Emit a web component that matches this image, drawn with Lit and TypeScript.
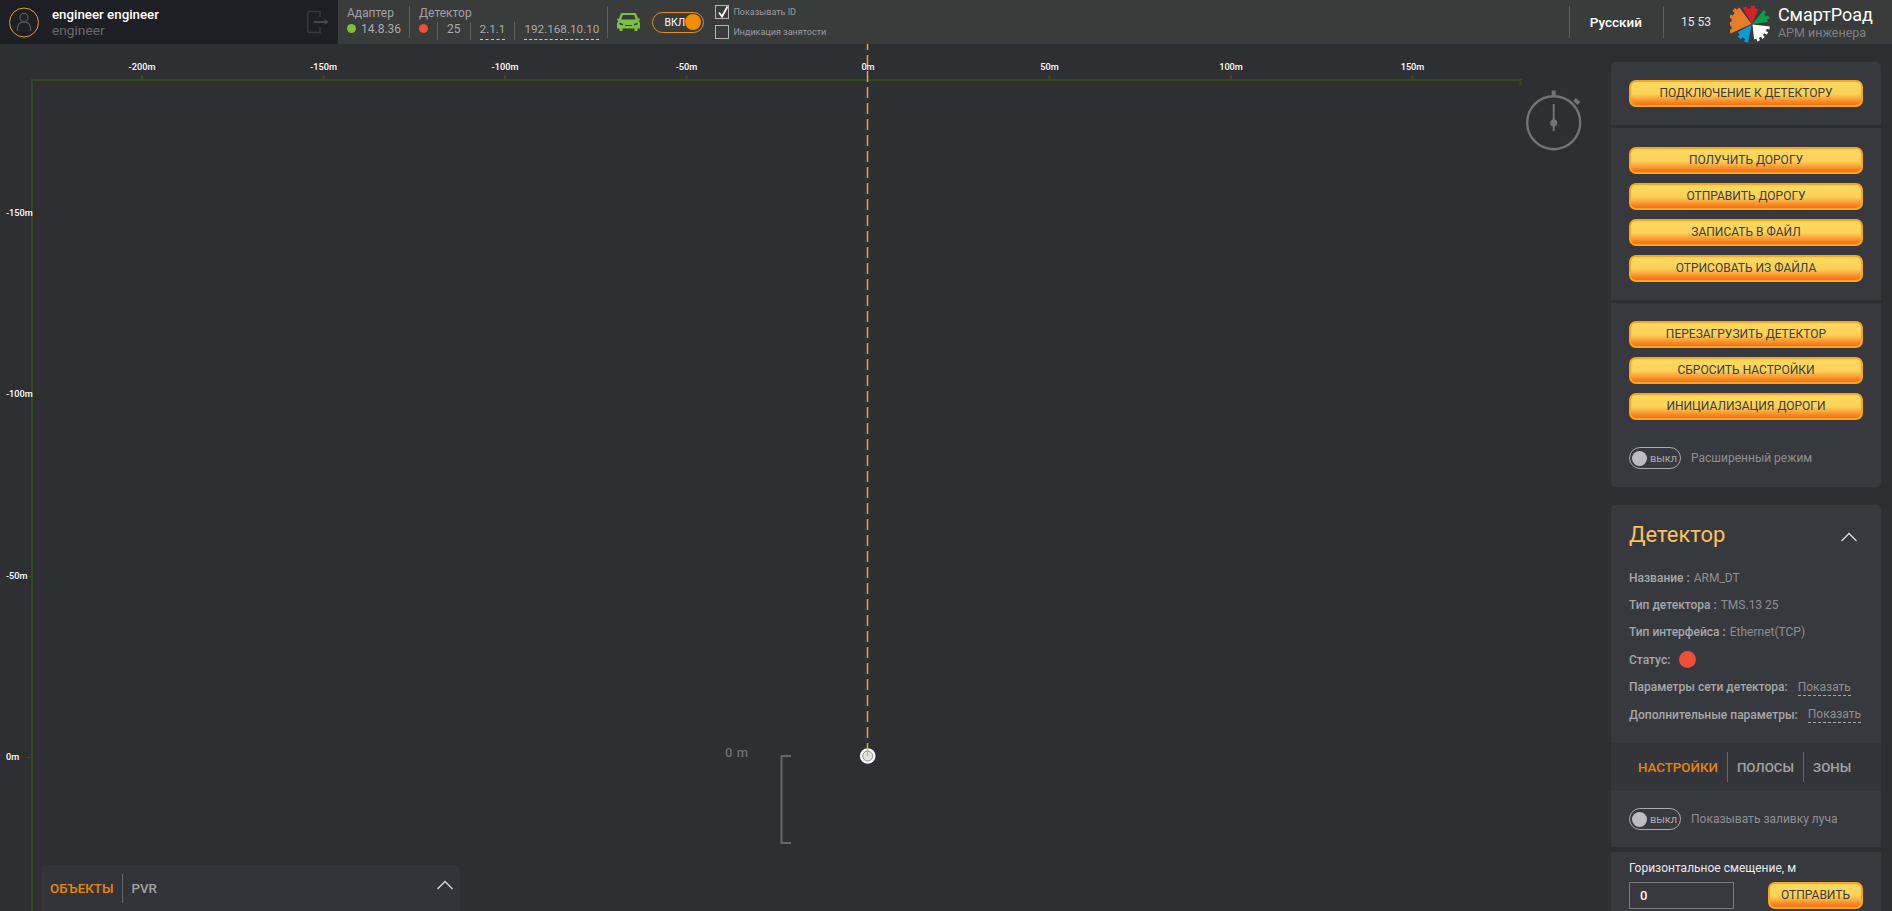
import { LitElement, html, css, svg } from 'lit';
import { customElement } from 'lit/decorators.js';

const TOP_LABELS = [-200, -150, -100, -50, 0, 50, 100, 150];
const LEFT_LABELS = [-150, -100, -50, 0];
const STEP = 181.5;
const ZERO_X = 868;
const ZERO_Y = 713; // canvas starts below the 44px header

// crenellated pie slice for the gear logo
function slice(a0: number, a1: number, r: number, cx: number, cy: number) {
  const pts: string[] = [`${cx},${cy}`];
  const teeth = Math.max(2, Math.round((a1 - a0) / 22));
  const step = (a1 - a0) / (teeth * 2);
  for (let i = 0; i < teeth * 2; i++) {
    const rr = i % 2 === 0 ? r : r - 2.6;
    for (const a of [a0 + i * step, a0 + (i + 1) * step]) {
      const rad = ((a - 90) * Math.PI) / 180;
      pts.push(`${(cx + rr * Math.cos(rad)).toFixed(1)},${(cy + rr * Math.sin(rad)).toFixed(1)}`);
    }
  }
  return pts.join(' ');
}

@customElement('app-root')
export class AppRoot extends LitElement {
  static styles = css`
    :host {
      display: block;
      width: 100%;
      height: 100vh;
      overflow: hidden;
      background: #2e2f33;
      font-family: Roboto, 'Liberation Sans', sans-serif;
      color: #a9aaac;
    }
    .app {
      display: flex;
      flex-direction: column;
      height: 100%;
    }

    /* header */
    .header {
      flex: 0 0 44px;
      display: flex;
      align-items: stretch;
      background: #3a3b3b;
      white-space: nowrap;
    }
    .user {
      flex: 0 0 338px;
      box-sizing: border-box;
      display: flex;
      align-items: center;
      background: #1e1f24;
      padding-left: 9px;
    }
    .avatar {
      display: block;
      margin-right: 13px;
    }
    .user-names {
      flex: 1;
    }
    .user-name {
      font-size: 13.3px;
      font-weight: 500;
      line-height: 16px;
      color: #fff;
    }
    .user-role {
      font-size: 13.7px;
      line-height: 15px;
      color: #68696c;
    }
    .logout {
      display: block;
      margin-right: 9px;
    }
    .status {
      display: flex;
      align-items: center;
      padding-left: 9px;
    }
    .vline {
      width: 1px;
      height: 32px;
      background: #5d5e5f;
      flex: none;
    }
    .vline.short {
      height: 18px;
      margin-top: 1px;
    }
    .block {
      display: flex;
      flex-direction: column;
      padding-top: 2px;
      font-size: 12px;
      line-height: 16px;
      color: #a9aaac;
    }
    .block-title {
      color: #a0a1a3;
    }
    .block-row {
      display: flex;
      align-items: flex-start;
      height: 20px;
    }
    .dot {
      width: 9px;
      height: 9px;
      border-radius: 50%;
      flex: none;
      margin-top: 3px;
    }
    .dot.green {
      background: #7cc232;
      margin-right: 5px;
    }
    .dot.red {
      background: #f04e37;
      margin-right: 9px;
    }
    .adapter {
      margin-right: 8px;
    }
    .detector {
      margin-left: 9px;
      margin-right: 8px;
    }
    .num {
      margin: 0 9px;
    }
    .dashed {
      border-bottom: 1px dashed #c8c8c8;
      padding-bottom: 2px;
      margin: 0 9px;
      font-size: 11.7px;
    }
    .dashed.end {
      margin-right: 0;
    }
    .car {
      display: block;
      margin: 0 12px 0 9px;
    }
    .switch-on {
      box-sizing: border-box;
      width: 52px;
      height: 21px;
      display: flex;
      align-items: center;
      justify-content: space-between;
      border: 1px solid #e8911a;
      border-radius: 11px;
      padding: 0 2px 0 11px;
      font-size: 10.5px;
      color: #fff;
      margin-right: 11px;
    }
    .switch-on i {
      flex: none;
      width: 16px;
      height: 16px;
      border-radius: 50%;
      background: #f08c00;
    }
    .checks {
      display: flex;
      flex-direction: column;
      gap: 6px;
      margin-top: -1px;
      font-size: 9px;
      color: #9a9b9c;
    }
    .check {
      display: flex;
      align-items: center;
      gap: 4px;
      height: 14px;
    }
    .box {
      box-sizing: border-box;
      width: 14px;
      height: 14px;
      border: 1px solid #b5b5b5;
      position: relative;
    }
    .box svg {
      position: absolute;
      left: 1px;
      top: -1px;
    }
    .spacer {
      flex: 1;
    }
    .center {
      align-self: center;
    }
    .lang {
      font-size: 13.5px;
      font-weight: 500;
      color: #fff;
      margin: 0 21px 0 20px;
    }
    .time {
      font-size: 12px;
      color: #e4e5e6;
      margin: 0 19px 0 17px;
    }
    .logo {
      display: block;
      align-self: center;
      margin-right: 2px;
    }
    .brand {
      align-self: center;
      padding-left: 2px;
      margin-right: 19px;
    }
    .brand-name {
      font-size: 18px;
      line-height: 21px;
      color: #fff;
    }
    .brand-sub {
      font-size: 12.5px;
      line-height: 15px;
      color: #7f8082;
    }

    /* main */
    .main {
      flex: 1;
      display: flex;
      min-height: 0;
    }
    .canvas {
      flex: 0 0 1593px;
      position: relative;
      overflow: hidden;
    }
    .canvas > svg {
      position: absolute;
      left: 0;
      top: 0;
    }
    .label {
      position: absolute;
      font-size: 9.2px;
      line-height: 12px;
      font-weight: 500;
      color: #fff;
      white-space: nowrap;
    }
    .label.top {
      top: 17px;
      transform: translateX(-50%);
    }
    .label.left {
      left: 6px;
      transform: translateY(-50%);
    }
    .range {
      position: absolute;
      left: 725px;
      top: 701px;
      font-size: 13px;
      line-height: 15px;
      font-weight: 500;
      letter-spacing: 0.6px;
      color: #6d6e71;
    }
    .objects {
      position: absolute;
      left: 41px;
      bottom: 0;
      width: 419px;
      height: 46px;
      box-sizing: border-box;
      display: flex;
      align-items: center;
      padding: 1px 7px 0 9px;
      background: #33343a;
      border-radius: 5px 5px 0 0;
      font-size: 13.3px;
      font-weight: 500;
      color: #a0a1a3;
    }
    .objects .vline {
      height: 29px;
      margin: 0 8px 0 9px;
      background: #66676a;
    }
    .objects .spacer + svg {
      display: block;
      margin-top: -7px;
    }
    .active {
      color: #e8860c;
    }

    /* side panel */
    .side {
      flex: 1;
      box-sizing: border-box;
      padding: 18px 11px 0 18px;
      display: flex;
      flex-direction: column;
      overflow: hidden;
    }
    .group {
      background: #38393f;
      padding: 18px;
      display: flex;
      flex-direction: column;
      gap: 9px;
      flex: none;
    }
    .group + .group {
      margin-top: 3px;
    }
    .group.first {
      border-radius: 5px 5px 0 0;
    }
    .group.last {
      border-radius: 0 0 5px 5px;
    }
    .group.gap-top {
      padding-top: 19px;
    }
    button {
      box-sizing: border-box;
      height: 27px;
      border: 2px solid #f9a51f;
      border-radius: 7px;
      background: linear-gradient(#fdd860 0%, #fcd258 52%, #f87c1c 92%, #f7701a 100%);
      font-family: inherit;
      font-size: 12px;
      color: #3c3a38;
      padding: 0 0 1px;
    }
    .toggle-row {
      display: flex;
      align-items: center;
      gap: 10px;
      font-size: 12px;
      color: #8e8f92;
      white-space: nowrap;
    }
    .toggle-row.adv {
      margin-top: 18px;
    }
    .switch-off {
      box-sizing: border-box;
      width: 52px;
      height: 22px;
      display: flex;
      align-items: center;
      gap: 3px;
      border: 1px solid #a8a9ab;
      border-radius: 11px;
      padding-left: 2px;
      font-size: 11px;
      color: #a9aaac;
    }
    .switch-off i {
      width: 15px;
      height: 15px;
      border-radius: 50%;
      background: #bdbdbf;
    }
    .info {
      background: #38393f;
      margin-top: 18px;
      height: 238px;
      box-sizing: border-box;
      padding: 0 18px;
      border-radius: 5px 5px 0 0;
      flex: none;
      font-size: 12px;
    }
    .info-head {
      height: 59px;
      display: flex;
      align-items: center;
      justify-content: space-between;
      padding: 0 6px 0 0;
    }
    .info-head h2 {
      margin: 0;
      font-size: 22px;
      font-weight: 400;
      color: #fbc25f;
    }
    .info-head svg {
      display: block;
      margin-top: 5px;
    }
    .info-row {
      height: 27.4px;
      display: flex;
      align-items: center;
      gap: 4px;
      white-space: nowrap;
      color: #8e8f92;
    }
    .info-row b {
      font-weight: 500;
      color: #a6a7a9;
    }
    .info-row .link {
      border-bottom: 1px dashed #a6a7a9;
      line-height: 16px;
      margin-left: 6px;
      color: #8e8f92;
    }
    .status-dot {
      width: 17px;
      height: 17px;
      background: #f04e37;
      border-radius: 50%;
      margin-left: 5px;
    }
    .tabs {
      height: 48px;
      flex: none;
      display: flex;
      align-items: center;
      padding-left: 27px;
      background: #34353b;
      font-size: 13.3px;
      font-weight: 500;
      color: #a3a4a6;
      white-space: nowrap;
    }
    .tabs .vline {
      height: 30px;
      background: #66676a;
      margin: 0 9px;
    }
    .group.beam {
      height: 56px;
      box-sizing: border-box;
      padding: 0 18px;
      justify-content: center;
      margin-top: 0;
    }
    .group.form {
      margin-top: 5px;
      padding: 9px 18px 2px;
      gap: 7px;
      flex: 1;
      font-size: 12px;
      color: #e9e9ea;
    }
    .form-row {
      display: flex;
      justify-content: space-between;
    }
    .input {
      box-sizing: border-box;
      width: 105px;
      height: 27px;
      border: 1px solid #77787a;
      padding-left: 10px;
      font-size: 13px;
      font-weight: 500;
      line-height: 25px;
      color: #fff;
    }
    .send {
      width: 95px;
    }
  `;

  private _topLabels() {
    return TOP_LABELS.map(
      (v) =>
        html`<span class="label top" style="left:${ZERO_X + (v / 50) * STEP}px">${v}m</span>`,
    );
  }

  private _leftLabels() {
    return LEFT_LABELS.map(
      (v) =>
        html`<span class="label left" style="top:${ZERO_Y + (v / 50) * STEP}px">${v}m</span>`,
    );
  }

  private _grid() {
    const line = '#36491a';
    return svg`
      <svg width="1593" height="867" fill="none">
        <path d="M32 867V36H1520.5V41" stroke=${line} stroke-width="2"/>
        ${TOP_LABELS.map((v) => {
          const x = ZERO_X + (v / 50) * STEP;
          return svg`<path d="M${x} 31V36" stroke=${line} stroke-width="2"/>`;
        })}
        ${LEFT_LABELS.map((v) => {
          const y = Math.round(ZERO_Y + (v / 50) * STEP);
          return svg`<path d="M26 ${y}.5H32" stroke=${line} stroke-width="1"/>`;
        })}
        <path d="M867.5 0V704" stroke="#e8a33d" stroke-width="1.5" stroke-dasharray="11 5" stroke-dashoffset="5"/>
        <circle cx="867.7" cy="712" r="7.8" fill="#fff"/>
        <circle cx="867.7" cy="712" r="5" fill="#e4e4e5" stroke="#8b8c8e" stroke-width="1"/>
        <path d="M867.5 702V712" stroke="#e8a33d" stroke-width="1.2"/>
        <path d="M791 712H781.5V799H791" stroke="#66676a" stroke-width="2"/>
        <g stroke="#727375">
          <circle cx="1553.7" cy="78.7" r="26.5" stroke-width="2.4"/>
          <path d="M1553.7 46.5V52" stroke-width="4"/>
          <path d="M1574.5 55.5L1579 59.5" stroke-width="4"/>
          <path d="M1553.7 60V87" stroke-width="2"/>
        </g>
        <circle cx="1553.7" cy="79" r="3.5" fill="#727375"/>
      </svg>
    `;
  }

  private _chevron() {
    return html`<svg width="16" height="10" viewBox="0 0 16 10" fill="none">
      <path d="M.5 9L8 1.5 15.5 9" stroke="#dcdcdd" stroke-width="1.3"/>
    </svg>`;
  }

  render() {
    return html`
      <div class="app">
        <div class="header">
          <div class="user">
            <svg class="avatar" width="30" height="31" viewBox="0 0 30 31" fill="none">
              <circle cx="15" cy="15.5" r="14.5" stroke="#e59a1c" stroke-width="1"/>
              <circle cx="15" cy="10.5" r="4" stroke="#55565a" stroke-width="1.3"/>
              <path d="M8.5 24v-3c0-3.5 2.5-6 6.5-6s6.5 2.5 6.5 6v3" stroke="#55565a" stroke-width="1.3"/>
            </svg>
            <div class="user-names">
              <div class="user-name">engineer engineer</div>
              <div class="user-role">engineer</div>
            </div>
            <svg class="logout" width="22" height="24" viewBox="0 0 22 24" fill="none">
              <path d="M13 7V1.5H2A1.5 1.5 0 0 0 .8 3v18a1.5 1.5 0 0 0 1.2 1.5H13V17" stroke="#38393d" stroke-width="1.5"/>
              <path d="M7 12H19" stroke="#4a4b4e" stroke-width="1.8"/>
              <path d="M17.5 9L21.5 12 17.5 15z" fill="#4a4b4e"/>
            </svg>
          </div>
          <div class="status">
            <div class="block adapter">
              <span class="block-title">Адаптер</span>
              <div class="block-row"><span class="dot green"></span>14.8.36</div>
            </div>
            <span class="vline"></span>
            <div class="block detector">
              <span class="block-title">Детектор</span>
              <div class="block-row">
                <span class="dot red"></span>
                <span class="vline short"></span>
                <span class="num">25</span>
                <span class="vline short"></span>
                <span class="dashed">2.1.1</span>
                <span class="vline short"></span>
                <span class="dashed end">192.168.10.10</span>
              </div>
            </div>
            <span class="vline"></span>
            <svg class="car" width="23" height="18" viewBox="0 0 23 18" fill="#7cc142">
              <path fill-rule="evenodd" d="M5.5 0H17.5C18.5 0 19.2.6 19.6 1.5L21 5.5H22.3C22.8 5.5 23 6 22.9 6.4L22.5 7.4 21.5 7.8C22.4 8.6 23 9.6 23 11V15.5H20.5V18H17.5V15.5H5.5V18H2.5V15.5H0V11C0 9.6.6 8.6 1.5 7.8L.5 7.4.1 6.4C0 6 .2 5.5.7 5.5H2L3.4 1.5C3.8.6 4.5 0 5.5 0ZM5.8 2L4.3 6.5H18.7L17.2 2ZM2.5 9.5V11.5L6 12.5V11ZM20.5 9.5L17 11V12.5L20.5 11.5ZM8 12V13H15V12Z"/>
            </svg>
            <div class="switch-on">ВКЛ<i></i></div>
            <div class="checks">
              <div class="check">
                <span class="box">
                  <svg width="13" height="14" viewBox="0 0 13 14" fill="none">
                    <path d="M2 7.5L5 11.5 10.5 1.5" stroke="#fff" stroke-width="1.8"/>
                  </svg>
                </span>
                Показывать ID
              </div>
              <div class="check"><span class="box"></span>Индикация занятости</div>
            </div>
          </div>
          <div class="spacer"></div>
          <span class="vline center"></span>
          <span class="lang center">Русский</span>
          <span class="vline center"></span>
          <span class="time center">15 53</span>
          <svg class="logo" width="44" height="44" viewBox="0 0 44 44">
            <polygon points=${slice(246, 324, 23, 21.5, 24)} fill="#e77c2b"/>
            <polygon points=${slice(330, 383, 18.5, 22, 24)} fill="#d2232a"/>
            <polygon points=${slice(39, 83, 18, 22.5, 24)} fill="#0f9d4a"/>
            <polygon points=${slice(97, 174, 17.5, 22.5, 24.5)} fill="#ffffff"/>
            <polygon points=${slice(191, 243, 18, 21.5, 25)} fill="#0f9ad7"/>
          </svg>
          <div class="brand">
            <div class="brand-name">СмартРоад</div>
            <div class="brand-sub">АРМ инженера</div>
          </div>
        </div>

        <div class="main">
          <div class="canvas">
            ${this._grid()} ${this._topLabels()} ${this._leftLabels()}
            <span class="range">0 m</span>
            <div class="objects">
              <span class="active">ОБЪЕКТЫ</span>
              <span class="vline"></span>
              <span>PVR</span>
              <span class="spacer"></span>
              ${this._chevron()}
            </div>
          </div>

          <div class="side">
            <div class="group first"><button>ПОДКЛЮЧЕНИЕ К ДЕТЕКТОРУ</button></div>
            <div class="group gap-top">
              <button>ПОЛУЧИТЬ ДОРОГУ</button>
              <button>ОТПРАВИТЬ ДОРОГУ</button>
              <button>ЗАПИСАТЬ В ФАЙЛ</button>
              <button>ОТРИСОВАТЬ ИЗ ФАЙЛА</button>
            </div>
            <div class="group last">
              <button>ПЕРЕЗАГРУЗИТЬ ДЕТЕКТОР</button>
              <button>СБРОСИТЬ НАСТРОЙКИ</button>
              <button>ИНИЦИАЛИЗАЦИЯ ДОРОГИ</button>
              <div class="toggle-row adv">
                <div class="switch-off"><i></i>выкл</div>
                Расширенный режим
              </div>
            </div>

            <div class="info">
              <div class="info-head"><h2>Детектор</h2>${this._chevron()}</div>
              <div class="info-row"><b>Название :</b> ARM_DT</div>
              <div class="info-row"><b>Тип детектора :</b> TMS.13 25</div>
              <div class="info-row"><b>Тип интерфейса :</b> Ethernet(TCP)</div>
              <div class="info-row"><b>Статус:</b><span class="status-dot"></span></div>
              <div class="info-row"><b>Параметры сети детектора:</b><span class="link">Показать</span></div>
              <div class="info-row"><b>Дополнительные параметры:</b><span class="link">Показать</span></div>
            </div>
            <div class="tabs">
              <span class="active">НАСТРОЙКИ</span>
              <span class="vline"></span>
              <span>ПОЛОСЫ</span>
              <span class="vline"></span>
              <span>ЗОНЫ</span>
            </div>
            <div class="group beam">
              <div class="toggle-row">
                <div class="switch-off"><i></i>выкл</div>
                Показывать заливку луча
              </div>
            </div>
            <div class="group form">
              <div>Горизонтальное смещение, м</div>
              <div class="form-row">
                <div class="input">0</div>
                <button class="send">ОТПРАВИТЬ</button>
              </div>
            </div>
          </div>
        </div>
      </div>
    `;
  }
}
